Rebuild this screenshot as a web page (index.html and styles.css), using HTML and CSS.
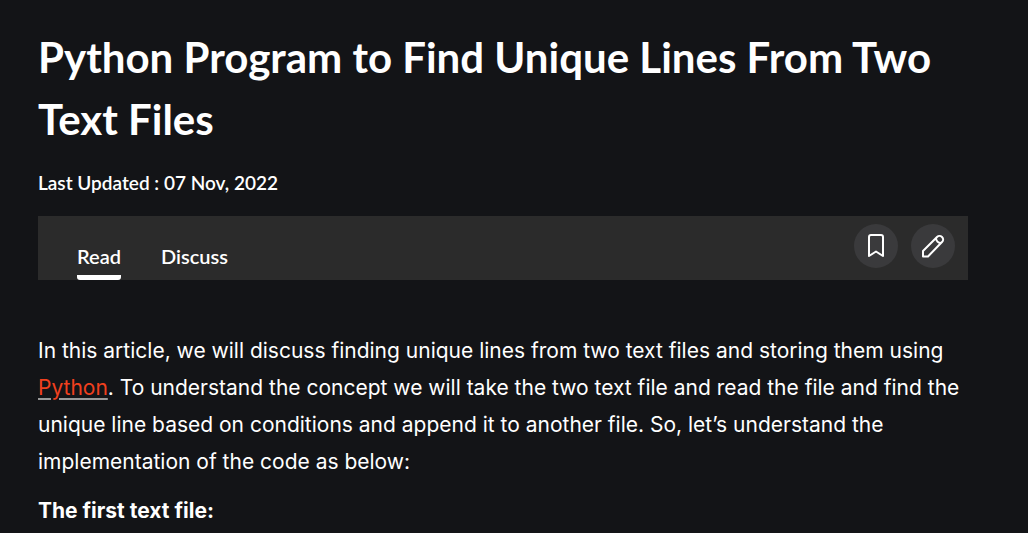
FILE: index.html
```html
<!DOCTYPE html>
<html lang="en">
<head>
<meta charset="utf-8">
<meta name="viewport" content="width=device-width, initial-scale=1">
<title>Python Program to Find Unique Lines From Two Text Files</title>
<link rel="stylesheet" href="styles.css">
</head>
<body>
<main class="article">
  <h1 class="title">Python Program to Find Unique Lines From Two Text Files</h1>
  <p class="updated">Last Updated : 07 Nov, 2022</p>
  <div class="toolbar">
    <nav class="tabs" aria-label="Article views">
      <a class="tab tab-active" href="#read" aria-current="page">Read</a>
      <a class="tab" href="#discuss">Discuss</a>
    </nav>
    <div class="actions">
      <button class="action" type="button" aria-label="Bookmark">
        <svg class="icon" viewBox="0 0 24 24" aria-hidden="true"><path d="M7 1H17Q19 1 19 3V22L12 17.500L5 22V3Q5 1 7 1Z"/></svg>
      </button>
      <button class="action" type="button" aria-label="Edit">
        <svg class="icon" viewBox="0 0 24 24" aria-hidden="true"><path d="M2 22.500V17L16 3C17.500 1.500 19.500 1.500 21 3C22.500 4.500 22.500 6.500 21 8L7 22.500ZM15 4C15.200 6.800 17.200 8.800 20 9"/></svg>
      </button>
    </div>
  </div>
  <div class="content" id="read">
    <p class="text">In this article, we will discuss finding unique lines from two text files and storing them using <a class="link" href="#python">Python</a>. To understand the concept we will take the two text file and read the file and find the unique line based on conditions and append it to another file. So, let’s understand the implementation of the code as below:</p>
    <p class="text"><strong>The first text file:</strong></p>
  </div>
</main>
</body>
</html>
```
FILE: styles.css
```css
* { box-sizing: border-box; }
body {
  margin: 0;
  background: #131417;
  color: #fff;
  font-family: Lato, "Open Sans", sans-serif;
}
.article { padding: 26px 60px 0 38px; }
.title {
  margin: 0;
  font-size: 42px;
  line-height: 62px;
  font-weight: 700;
}
.updated {
  margin: 21px 0;
  font-size: 19px;
  line-height: 24px;
  font-weight: 600;
}
.toolbar {
  display: flex;
  justify-content: space-between;
  align-items: stretch;
  height: 64px;
  padding: 0 13px 0 39px;
  background: #2b2b2b;
}
.tabs { display: flex; align-items: flex-end; gap: 40px; }
.tab {
  padding-bottom: 7px;
  border-bottom: 5px solid transparent;
  color: #fff;
  font-size: 20px;
  line-height: 24px;
  font-weight: 600;
  text-decoration: none;
}
.tab-active { border-color: #fff; border-radius: 0 0 3px 3px; }
.actions { display: flex; align-items: flex-start; gap: 13px; padding-top: 8px; }
.action {
  display: grid;
  place-items: center;
  width: 44px;
  height: 44px;
  padding: 0;
  border: 0;
  border-radius: 50%;
  background: #3a3a3c;
  color: #fff;
}
.icon {
  width: 24px;
  height: 24px;
  fill: none;
  stroke: currentColor;
  stroke-width: 2;
  stroke-linejoin: round;
}
.content { padding-top: 52px; }
.text {
  margin: 0 0 12px;
  font-family: Inter, Roboto, sans-serif;
  font-size: 21px;
  line-height: 37px;
}
.link {
  color: #f1401e;
  text-decoration-color: #999;
  text-decoration-thickness: 2px;
  text-underline-offset: 3px;
}
```
